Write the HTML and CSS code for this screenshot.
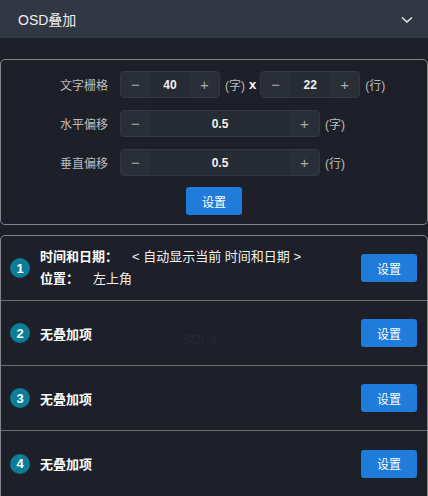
FILE: index.html
```html
<!doctype html>
<html>
	<head>
		<title>OSD叠加</title>
		<meta charset="utf-8" />
		<link rel="stylesheet" href="styles.css">
	</head>
	<body>
		<div class="head">
			<span class="head-title">OSD叠加</span>
			<svg class="chevron" width="12" height="8" viewBox="0 0 12 8"><path d="M1 1.5 L6 6 L11 1.5" fill="none" stroke="#e6e6e6" stroke-width="1.6"/></svg>
		</div>

		<div class="panel form">
			<div class="row">
				<label class="lab">文字栅格</label>
				<div class="num small">
					<span class="op">−</span><span class="val">40</span><span class="op">+</span>
				</div>
				<span class="unit">(字)</span>
				<span class="times">x</span>
				<div class="num small">
					<span class="op">−</span><span class="val">22</span><span class="op">+</span>
				</div>
				<span class="unit">(行)</span>
			</div>
			<div class="row">
				<label class="lab">水平偏移</label>
				<div class="num wide">
					<span class="op">−</span><span class="val">0.5</span><span class="op">+</span>
				</div>
				<span class="unit">(字)</span>
			</div>
			<div class="row">
				<label class="lab">垂直偏移</label>
				<div class="num wide">
					<span class="op">−</span><span class="val">0.5</span><span class="op">+</span>
				</div>
				<span class="unit">(行)</span>
			</div>
			<div class="submit">
				<button class="btn">设置</button>
			</div>
		</div>

		<div class="panel list">
			<div class="item">
				<span class="no">1</span>
				<div class="info">
					<div class="line"><b>时间和日期：</b><span class="v">&lt; 自动显示当前 时间和日期 &gt;</span></div>
					<div class="line"><b>位置：</b><span class="v">左上角</span></div>
				</div>
				<button class="btn">设置</button>
			</div>
			<div class="item">
				<span class="no">2</span>
				<div class="info"><b>无叠加项</b></div>
				<span class="mark">SDI-3</span>
				<button class="btn">设置</button>
			</div>
			<div class="item">
				<span class="no">3</span>
				<div class="info"><b>无叠加项</b></div>
				<button class="btn">设置</button>
			</div>
			<div class="item">
				<span class="no">4</span>
				<div class="info"><b>无叠加项</b></div>
				<button class="btn">设置</button>
			</div>
		</div>
	</body>
</html>
```

FILE: styles.css
```css
*{
	margin:0;
	padding:0;
	box-sizing:border-box;
}
body{
	background:#1e2029;
	font-family:"Liberation Sans","Noto Sans CJK SC",sans-serif;
	color:#fff;
	overflow:hidden;
}

/* 顶部标题栏 */
.head{
	height:38px;
	background:#323843;
	display:flex;
	align-items:center;
	justify-content:space-between;
	padding:0 15px 0 18px;
	font-size:14px;
	color:#eee;
}
.chevron{
	margin-top:1px;
}

.panel{
	border:1px solid #84868a;
	border-radius:5px;
}

/* 参数表单 */
.form{
	margin-top:21px;
	padding:11px 0 9px;
}
.row{
	display:flex;
	align-items:center;
	height:27px;
	margin-bottom:12px;
}
.lab{
	width:107px;
	margin-right:12px;
	text-align:right;
	font-size:12px;
	color:#bcbcbc;
}
.num{
	display:flex;
	height:27px;
	border:1px solid #33373f;
	border-radius:4px;
	background:#272b33;
	overflow:hidden;
}
.small{width:100px;}
.wide{width:200px;}
.op{
	width:29px;
	display:flex;
	align-items:center;
	justify-content:center;
	font-size:15px;
	color:#a9abaf;
	background:#2a2e36;
}
.val{
	flex:1;
	display:flex;
	align-items:center;
	justify-content:center;
	font-size:12px;
	font-weight:bold;
	color:#f2f2f2;
}
.unit{
	margin-left:5px;
	font-size:12px;
	color:#bcbcbc;
}
.times{
	margin:0 4px;
	font-size:13px;
	font-weight:bold;
}
.submit{
	display:flex;
	justify-content:center;
	padding-top:-1px;
	margin-top:-1px;
}
.btn{
	width:56px;
	height:28px;
	border:none;
	border-radius:3px;
	background:#1f7cdb;
	color:#fff;
	font-family:inherit;
	font-size:12px;
}

/* 叠加项列表 */
.list{
	margin-top:10px;
	height:280px;
}
.item{
	position:relative;
	display:flex;
	align-items:center;
	height:65px;
	padding:0 10px 0 9px;
	border-bottom:1px solid #6b6d71;
	font-size:13px;
}
.item:last-child{
	border-bottom:none;
}
.no{
	width:20px;
	height:20px;
	border-radius:50%;
	background:#0b7d96;
	display:flex;
	align-items:center;
	justify-content:center;
	font-size:13px;
	font-weight:bold;
	margin-right:10px;
}
.info{
	flex:1;
	color:#fff;
}
.line{
	line-height:22px;
}
.line .v{
	margin-left:14px;
	color:#f0f0f0;
}
.mark{
	position:absolute;
	left:182px;
	top:31px;
	font-size:13px;
	color:#262933;
}
```
